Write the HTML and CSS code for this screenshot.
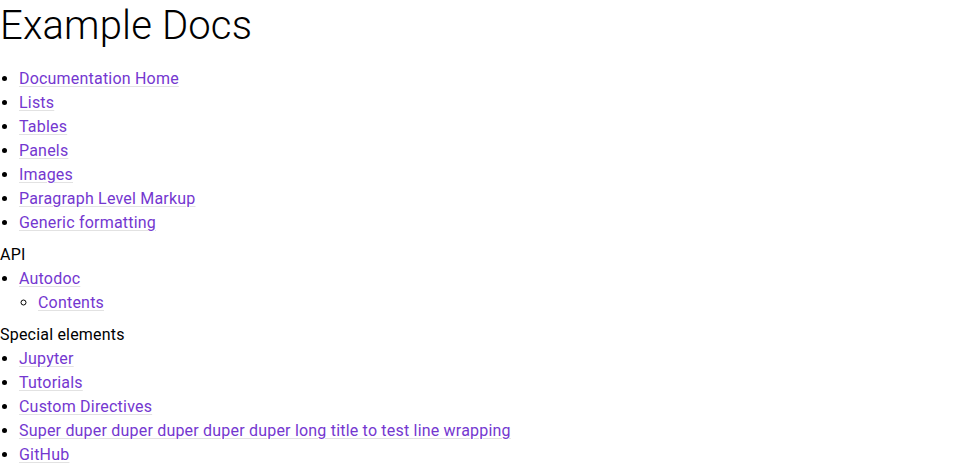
FILE: index.html
```html
<!DOCTYPE html>
<html lang="en">
<head>
<meta charset="utf-8">
<title>Example Docs</title>
<link rel="stylesheet" href="styles.css">
</head>
<body>
<h1 class="title">Example Docs</h1>
<ul class="toc">
  <li><a href="#">Documentation Home</a></li>
  <li><a href="#">Lists</a></li>
  <li><a href="#">Tables</a></li>
  <li><a href="#">Panels</a></li>
  <li><a href="#">Images</a></li>
  <li><a href="#">Paragraph Level Markup</a></li>
  <li><a href="#">Generic formatting</a></li>
</ul>
<p class="caption">API</p>
<ul class="toc">
  <li><a href="#">Autodoc</a>
    <ul class="toc sub">
      <li><a href="#">Contents</a></li>
    </ul>
  </li>
</ul>
<p class="caption">Special elements</p>
<ul class="toc">
  <li><a href="#">Jupyter</a></li>
  <li><a href="#">Tutorials</a></li>
  <li><a href="#">Custom Directives</a></li>
  <li><a href="#">Super duper duper duper duper duper long title to test line wrapping</a></li>
  <li><a href="#">GitHub</a></li>
</ul>
</body>
</html>
```
FILE: styles.css
```css
body {
  margin: 0;
  font-family: Roboto, "Liberation Sans", sans-serif;
  font-size: 16px;
  line-height: 24px;
  letter-spacing: 0.2px;
  color: #000;
  background: #fff;
}

.title {
  margin: 0 0 15px;
  font-size: 40px;
  line-height: 52px;
  font-weight: 300;
  letter-spacing: 0.15px;
}

.toc {
  margin: 0;
  padding-left: 19px;
  list-style: disc;
}

.toc.sub {
  list-style: circle;
}

.toc a {
  color: #7437d0;
  text-decoration: underline;
  text-decoration-color: #e2e2e2;
  text-decoration-thickness: 1px;
  text-underline-offset: 2px;
}

.caption {
  margin: 8px 0 0;
}
```
